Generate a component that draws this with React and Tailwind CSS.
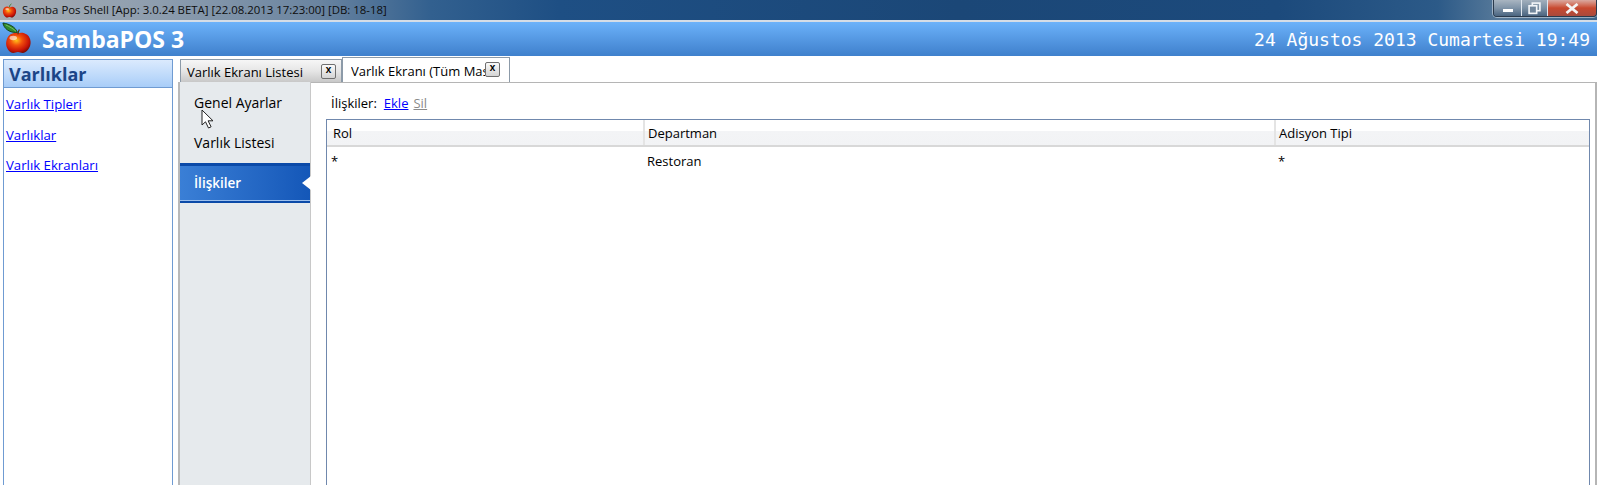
const ui = { fontFamily: '"Open Sans", "Noto Sans", sans-serif' };

function Apple({ size, leaf }) {
  const id = leaf ? 'a1' : 'a2';
  return (
    <svg width={size} height={size} viewBox="0 0 32 32" className="overflow-visible">
      <defs>
        <radialGradient id={id} cx="0.42" cy="0.38" r="0.68">
          <stop offset="0" stopColor="#ffc21a" />
          <stop offset="0.35" stopColor="#f2500c" />
          <stop offset="0.75" stopColor="#c81408" />
          <stop offset="1" stopColor="#6e0a04" />
        </radialGradient>
      </defs>
      {leaf ? (
        <>
          <path d="M17 11C13 10 6 11 4.500 20 3.500 26 8 32 12 32c2 0 3-1 5-1s3 1 5 1c4 0 9-6 8.500-12C30 11 21 9 17 11z" fill={`url(#${id})`} />
          <ellipse cx="12" cy="16" rx="4" ry="2.300" fill="#fff" opacity="0.6" />
          <path d="M16.500 10C14 4 8 1 1 0c1 6 7 10 13 10z" fill="#2f8a2a" stroke="#123f16" strokeWidth="1" />
          <path d="M4 2c4 2 8 4 11 7" stroke="#8fd07a" strokeWidth="0.8" fill="none" />
          <path d="M17 12c0-2 .5-3 1.500-5" stroke="#5a3510" strokeWidth="1.400" fill="none" />
        </>
      ) : (
        <>
          <path d="M16 9C12 6 3 7 2 16c-1 8 5 15 9 15 2 0 3-1 5-1s3 1 5 1c4 0 10-7 9-15-1-9-10-10-14-6z" fill={`url(#${id})`} />
          <ellipse cx="11" cy="13" rx="4" ry="2.500" fill="#fff" opacity="0.55" />
          <path d="M16 9c0-3 1-5 4-7" stroke="#3d7a20" strokeWidth="2" fill="none" />
        </>
      )}
    </svg>
  );
}

function WindowButtons() {
  return (
    <div className="flex h-[17px] w-[104px] self-start overflow-hidden rounded-b-[4px] border border-t-0 border-[#2b3a4c] shadow-[0_0_0_1px_rgba(255,255,255,0.45)]">
      <div className="flex w-[28px] items-center justify-center border-r border-[#dfe6ee] bg-gradient-to-b from-[#a9b5c1] via-[#8094a8] to-[#4b6580]">
        <div className="mt-[4px] h-[3px] w-[10px] bg-white" />
      </div>
      <div className="flex w-[26px] items-center justify-center border-r border-[#dfe6ee] bg-gradient-to-b from-[#a2afbc] via-[#7b90a4] to-[#4b6580]">
        <svg width="13" height="13" viewBox="0 0 12 12" fill="none" stroke="#f2f5f8" strokeWidth="1.500">
          <rect x="4" y="1" width="7" height="7" />
          <rect x="1" y="3.500" width="7" height="7" fill="#72879c" />
        </svg>
      </div>
      <div className="flex flex-1 items-center justify-center bg-gradient-to-b from-[#d9a9a0] via-[#c8492f] to-[#a94a3c]">
        <svg width="14" height="11" viewBox="0 0 14 11">
          <path d="M1.500 1L12.500 10M12.500 1L1.500 10" stroke="#f4f4f4" strokeWidth="2.800" />
        </svg>
      </div>
    </div>
  );
}

function CloseBox({ className = '' }) {
  return (
    <div className={`flex h-[15px] w-[15px] shrink-0 items-center justify-center rounded-[2px] border border-[#6f6f6f] bg-gradient-to-b from-[#fafafa] to-[#d4d4d4] text-[10px] font-bold leading-none text-black ${className}`} style={{ fontFamily: '"Liberation Mono", monospace' }}>
      x
    </div>
  );
}

function Link({ children }) {
  return <a className="text-[#0000ff] underline" href="#">{children}</a>;
}

export default function App() {
  return (
    <div className="relative flex h-[485px] w-[1597px] flex-col overflow-hidden bg-white text-[13px] text-black" style={ui}>
      {/* Title bar */}
      <div className="flex h-[20px] shrink-0 items-start justify-between bg-[linear-gradient(90deg,#a5adb5_0%,#8d9dae_10%,#6a84a0_20%,#32608f_27%,#1e4f84_35%,#1b4777_60%,#1c4a7c_80%,#2c5a88_90%,#587a9a_94%,#3b6489_100%)]">
        <div className="flex h-[20px] items-center">
          <div className="ml-[2px] mr-[5px] flex"><Apple size={15} /></div>
          <span className="text-[11.4px] leading-none text-[#0d0d0d]">Samba Pos Shell [App: 3.0.24 BETA] [22.08.2013 17:23:00] [DB: 18-18]</span>
        </div>
        <WindowButtons />
      </div>
      <div className="h-[2px] shrink-0 bg-[#d5dde6]" />

      {/* Header */}
      <div className="flex h-[34px] shrink-0 items-center justify-between bg-gradient-to-b from-[#6cb2fa] to-[#3f80cc] pl-[2px] pr-[7px]">
        <div className="flex items-center">
          <div className="-mt-[3px] flex"><Apple size={30} leaf /></div>
          <span className="ml-[10px] text-[23px] font-bold leading-none text-white">SambaPOS 3</span>
        </div>
        <span className="mt-[2px] text-[18px] leading-none text-white" style={{ fontFamily: '"DejaVu Sans Mono", monospace' }}>24 Ağustos 2013 Cumartesi 19:49</span>
      </div>

      {/* Body */}
      <div className="flex min-h-0 flex-1 pt-[3px]">
        {/* Left panel */}
        <div className="ml-[3px] flex w-[170px] shrink-0 flex-col border border-b-0 border-[#6f9bd2]">
          <div className="flex h-[28px] shrink-0 items-center border-b border-[#6f9bd2] bg-gradient-to-b from-[#dbeafd] via-[#c2dcfb] to-[#a8cdf8] pl-[5px] text-[18px] font-bold leading-none text-[#1c4587]">
            Varlıklar
          </div>
          <div className="flex flex-col gap-[14px] pl-[2px] pt-[8px] text-[13.2px] leading-[16.5px]">
            <div><Link>Varlık Tipleri</Link></div>
            <div><Link>Varlıklar</Link></div>
            <div><Link>Varlık Ekranları</Link></div>
          </div>
        </div>

        {/* Right area */}
        <div className="ml-[5px] flex min-w-0 flex-1 flex-col">
          {/* Tabs */}
          <div className="-mt-[2px] flex h-[25px] shrink-0 items-end">
            <div className="ml-[2px] flex h-[23px] w-[162px] items-center justify-between border border-b-0 border-[#8c9aa8] bg-gradient-to-b from-[#f6f6f6] via-[#e6e6e6] to-[#c8c8c8] pl-[6px] pr-[5px]">
              <span className="mt-[2px] whitespace-nowrap leading-none">Varlık Ekranı Listesi</span>
              <CloseBox />
            </div>
            <div className="flex h-[25px] w-[168px] items-center border border-b-0 border-[#8c9aa8] bg-white pl-[8px]">
              <span className="mt-[2px] w-[134px] overflow-hidden whitespace-nowrap leading-none">Varlık Ekranı (Tüm Masalar)</span>
              <CloseBox className="-mt-[2px]" />
            </div>
          </div>

          {/* Panel */}
          <div className="flex min-h-0 flex-1 border-t border-r-2 border-[#b5b5b5]">
            {/* Side menu */}
            <div className="-mt-px flex w-[133px] shrink-0 flex-col border-x border-l-2 border-[#c8c8c8] border-l-[#b9b9b9] bg-[#e6eaed] text-[14px]">
              <div className="flex h-[41px] shrink-0 items-center pl-[14px]">Genel Ayarlar</div>
              <div className="flex h-[40px] shrink-0 items-center pb-[2px] pl-[14px]">Varlık Listesi</div>
              <div className="relative flex h-[40px] shrink-0 items-center border-t-[3px] border-b-[2px] border-[#0b4aa8] bg-gradient-to-r from-[#3a7fd6] to-[#1457b8] pl-[14px] text-[13.5px] font-semibold text-white shadow-[inset_0_-1px_0_#9cc0ee]">
                İlişkiler
                <div className="absolute -right-px top-[10px] h-0 w-0 border-y-[7px] border-r-[9px] border-y-transparent border-r-white" />
              </div>
            </div>

            {/* Content */}
            <div className="flex min-w-0 flex-1 flex-col pl-[15px] pr-[5px]">
              <div className="flex h-[36px] shrink-0 items-center gap-[7px] pl-[5px] pt-[5px]">
                <span>İlişkiler:</span>
                <span className="flex gap-[5px]">
                  <Link>Ekle</Link>
                  <span className="text-[#8a8a8a] underline">Sil</span>
                </span>
              </div>
              <div className="flex min-h-0 flex-1 flex-col border border-b-0 border-[#7088ad]">
                <div className="grid h-[27px] shrink-0 grid-cols-[316px_631px_1fr] border-b-2 border-[#d8d8d8] bg-[linear-gradient(180deg,#ffffff_0%,#ffffff_43%,#f3f4f6_43%,#f2f3f5_100%)]">
                  <div className="flex items-center pl-[6px] pt-[3px]">Rol</div>
                  <div className="flex items-center border-l-2 border-[#e4e4e4] pl-[3px] pt-[3px]">Departman</div>
                  <div className="flex items-center border-l-2 border-[#e4e4e4] pl-[3px] pt-[3px]">Adisyon Tipi</div>
                </div>
                <div className="grid h-[29px] shrink-0 grid-cols-[316px_631px_1fr] items-center">
                  <div className="pl-[4px]">*</div>
                  <div className="pl-[4px]">Restoran</div>
                  <div className="pl-[4px]">*</div>
                </div>
              </div>
            </div>
          </div>
        </div>
      </div>

      {/* Mouse cursor */}
      <svg className="absolute left-[201px] top-[109px]" width="14" height="21" viewBox="0 0 14 21">
        <path d="M1 1v15l3.500-3.200L7.500 19l2.600-1.200-3-6H12z" fill="#fff" stroke="#222" strokeWidth="1" strokeLinejoin="miter" />
      </svg>
    </div>
  );
}
